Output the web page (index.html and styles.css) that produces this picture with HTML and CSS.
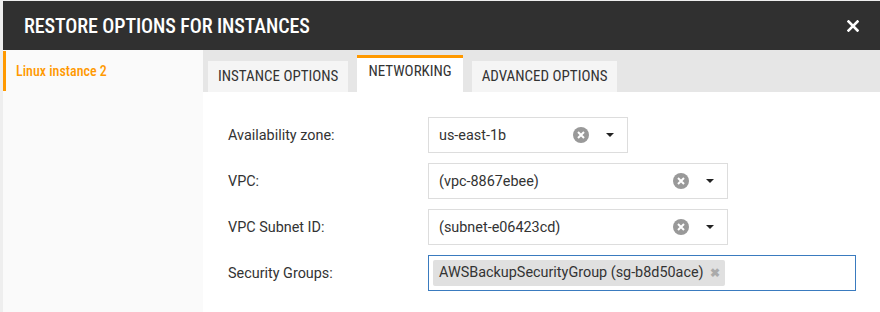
FILE: index.html
```html
<!DOCTYPE html>
<html>
	<head>
		<meta charset="utf-8">
		<title>Restore options for instances</title>
		<link rel="stylesheet" href="styles.css">
	</head>
	<body>
		<div class="dialog">
			<div class="dialog-header">
				<h1>Restore options for instances</h1>
				<span class="close">
					<svg width="12" height="12" viewBox="0 0 12 12"><path d="M1.5 1.5l9 9M10.5 1.5l-9 9" stroke="#fff" stroke-width="2.6" stroke-linecap="square"/></svg>
				</span>
			</div>
			<div class="dialog-body">
				<div class="sidebar">
					<div class="side-item active">Linux instance 2</div>
				</div>
				<div class="main">
					<div class="tabs">
						<div class="tab">Instance options</div>
						<div class="tab active">Networking</div>
						<div class="tab">Advanced options</div>
					</div>
					<div class="form">
						<div class="row">
							<label>Availability zone:</label>
							<div class="select w200">
								<span class="value">us-east-1b</span>
								<span class="clear"><svg width="16" height="16" viewBox="0 0 16 16"><circle cx="8" cy="8" r="8" fill="#999"/><path d="M5 5l6 6M11 5l-6 6" stroke="#fff" stroke-width="2"/></svg></span>
								<span class="arrow"></span>
							</div>
						</div>
						<div class="row">
							<label>VPC:</label>
							<div class="select w300">
								<span class="value">(vpc-8867ebee)</span>
								<span class="clear"><svg width="16" height="16" viewBox="0 0 16 16"><circle cx="8" cy="8" r="8" fill="#999"/><path d="M5 5l6 6M11 5l-6 6" stroke="#fff" stroke-width="2"/></svg></span>
								<span class="arrow"></span>
							</div>
						</div>
						<div class="row">
							<label>VPC Subnet ID:</label>
							<div class="select w300">
								<span class="value">(subnet-e06423cd)</span>
								<span class="clear"><svg width="16" height="16" viewBox="0 0 16 16"><circle cx="8" cy="8" r="8" fill="#999"/><path d="M5 5l6 6M11 5l-6 6" stroke="#fff" stroke-width="2"/></svg></span>
								<span class="arrow"></span>
							</div>
						</div>
						<div class="row">
							<label>Security Groups:</label>
							<div class="multi">
								<span class="tag">AWSBackupSecurityGroup (sg-b8d50ace)<span class="tag-x">&#10006;</span></span>
							</div>
						</div>
					</div>
				</div>
			</div>
		</div>
	</body>
</html>
```

FILE: styles.css
```css
body {
	margin: 0;
	background: #eeeeee;
	font-family: Roboto, "Liberation Sans", sans-serif;
	font-size: 14.4px;
	color: #333;
}
.dialog {
	margin: 1px 0 0 3px;
	height: 311px;
	background: #fff;
	display: flex;
	flex-direction: column;
}
.dialog-header {
	height: 49px;
	background: #303030;
	display: flex;
	align-items: center;
	padding: 0 21px;
}
.dialog-header h1 {
	flex: 1;
	margin: 0;
	font-family: "Roboto Condensed", "Liberation Sans Narrow", Roboto, sans-serif;
	font-stretch: condensed;
	font-weight: 500;
	font-size: 20px;
	letter-spacing: -0.1px;
	text-transform: uppercase;
	color: #fff;
}
.close {
	display: flex;
}
.dialog-body {
	flex: 1;
	display: flex;
}
.sidebar {
	width: 200px;
	background: #fafafa;
	padding-top: 1px;
}
.side-item {
	height: 40px;
	line-height: 40px;
	padding-left: 10px;
	border-left: 3px solid transparent;
	font-family: "Roboto Condensed", "Liberation Sans Narrow", Roboto, sans-serif;
	font-stretch: condensed;
	font-weight: 500;
	font-size: 14px;
}
.side-item.active {
	border-left-color: #ff9900;
	color: #ff9900;
}
.main {
	flex: 1;
}
.tabs {
	height: 42px;
	background: #e6e6e6;
	display: flex;
	align-items: flex-end;
	gap: 9px;
	padding-left: 5px;
}
.tab {
	height: 31px;
	line-height: 31px;
	padding: 0 10px;
	background: #f5f5f5;
	font-family: "Roboto Condensed", "Liberation Sans Narrow", Roboto, sans-serif;
	font-stretch: condensed;
	font-size: 15px;
	text-transform: uppercase;
	color: #333;
}
.tab.active {
	height: 34px;
	line-height: 27px;
	background: #fff;
	border-top: 3px solid #ff9900;
	padding: 0 11px;
}
.form {
	padding: 25px 0 0 25px;
	display: flex;
	flex-direction: column;
	gap: 10px;
}
.row {
	display: flex;
	align-items: center;
}
.row label {
	width: 200px;
}
.select {
	height: 34px;
	border: 1px solid #ddd;
	display: flex;
	align-items: center;
	padding-left: 10px;
}
.w200 {
	width: 188px;
}
.w300 {
	width: 288px;
}
.value {
	flex: 1;
}
.clear {
	display: flex;
}
.arrow {
	width: 28px;
	margin: 0 3px 0 7px;
	display: flex;
	justify-content: center;
}
.arrow::after {
	content: "";
	border-left: 4px solid transparent;
	border-right: 4px solid transparent;
	border-top: 4px solid #222;
}
.multi {
	width: 422px;
	height: 34px;
	border: 1px solid #3a7bbf;
	display: flex;
	align-items: center;
	padding-left: 4px;
}
.tag {
	height: 26px;
	line-height: 26px;
	background: #e0e0e0;
	border-radius: 2px;
	padding: 0 5px 0 6px;
}
.tag-x {
	color: #aaa;
	font-size: 12px;
	font-weight: bold;
	margin-left: 6px;
}
```
